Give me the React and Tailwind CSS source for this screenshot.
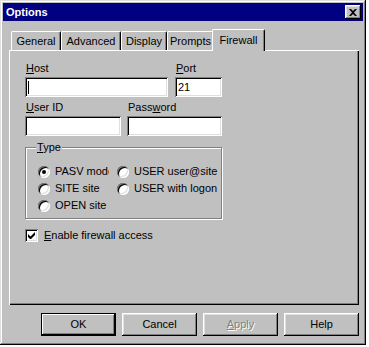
import React from "react";

const raised =
  "shadow-[inset_-1px_-1px_#000,inset_1px_1px_#fff,inset_-2px_-2px_#808080,inset_2px_2px_#dfdfdf]";
const sunken =
  "shadow-[inset_1px_1px_#808080,inset_-1px_-1px_#fff,inset_2px_2px_#000,inset_-2px_-2px_#dfdfdf]";

function Tab({ label, width, active }) {
  if (active) {
    return (
      <div
        className={`relative z-10 -ml-[2px] -mb-[1px] flex h-[22px] ${width} items-start justify-center rounded-t-[2px] border-l border-t border-r border-white border-r-black bg-[#c0c0c0] pt-[4px] shadow-[inset_-1px_0_#808080]`}
      >
        {label}
      </div>
    );
  }
  return (
    <div
      className={`flex h-[19px] ${width} items-start justify-center rounded-t-[2px] border-l border-t border-r border-white border-r-black pt-[3px] shadow-[inset_-1px_0_#808080]`}
    >
      {label}
    </div>
  );
}

function Radio({ checked, label, clip }) {
  return (
    <div className="flex h-[17px] items-center gap-[5px]">
      <span
        className={`flex h-[12px] w-[12px] shrink-0 items-center justify-center rounded-full bg-white ${sunken}`}
      >
        {checked && <span className="h-[4px] w-[4px] rounded-full bg-black" />}
      </span>
      <span className={clip ? "w-[54px] overflow-hidden whitespace-nowrap" : "whitespace-nowrap"}>
        {label}
      </span>
    </div>
  );
}

function Button({ children, isDefault }) {
  return (
    <div
      className={`flex h-[23px] w-[75px] items-center justify-center bg-[#c0c0c0] ${
        isDefault
          ? "border border-black shadow-[inset_-1px_-1px_#000,inset_1px_1px_#fff,inset_-2px_-2px_#808080]"
          : raised
      }`}
    >
      {children}
    </div>
  );
}

export default function App() {
  return (
    <div className="h-[347px] w-[369px] bg-white font-['Liberation_Sans',sans-serif] text-[11px] leading-[13px] text-black">
      <div className="flex h-[345px] w-[366px] flex-col bg-[#c0c0c0] p-[3px] shadow-[inset_-1px_-1px_#000,inset_1px_1px_#dfdfdf,inset_-2px_-2px_#808080,inset_2px_2px_#fff]">
        {/* title bar */}
        <div className="flex h-[18px] items-center justify-between bg-[#000080] pl-[3px] pr-[2px]">
          <span className="font-bold text-white">Options</span>
          <div className={`flex h-[14px] w-[16px] items-center justify-center bg-[#c0c0c0] ${raised}`}>
            <svg width="8" height="7" viewBox="0 0 8 7">
              <path d="M0 0h2l2 2 2-2h2L5 3.5 8 7H6L4 5 2 7H0l3-3.5z" fill="#000" />
            </svg>
          </div>
        </div>

        <div className="flex flex-col px-[6px] pt-[8px]">
          {/* tabs */}
          <div className="flex h-[21px] items-end pl-[2px]">
            <Tab label="General" width="w-[50px]" />
            <Tab label="Advanced" width="w-[60px]" />
            <Tab label="Display" width="w-[46px]" />
            <Tab label="Prompts" width="w-[47px]" />
            <Tab label="Firewall" width="w-[53px]" active />
          </div>

          {/* panel */}
          <div className="flex h-[255px] w-[350px] flex-col pl-[16px] pt-[12px] shadow-[inset_1px_1px_#fff,inset_-1px_-1px_#000,inset_-2px_-2px_#808080]">
            <div className="flex gap-[7px]">
              <div className="flex w-[143px] flex-col">
                <span className="h-[15px] pl-[1px]">
                  <u>H</u>ost
                </span>
                <div className={`flex h-[20px] items-center bg-white pl-[3px] ${sunken}`}>
                  <span className="h-[13px] w-[1px] bg-black" />
                </div>
              </div>
              <div className="flex w-[47px] flex-col">
                <span className="h-[15px] pl-[1px]">
                  <u>P</u>ort
                </span>
                <div className={`flex h-[20px] items-center bg-white pl-[3px] ${sunken}`}>21</div>
              </div>
            </div>

            <div className="mt-[4px] flex gap-[6px]">
              <div className="flex w-[96px] flex-col">
                <span className="h-[15px] pl-[1px]">
                  <u>U</u>ser ID
                </span>
                <div className={`h-[20px] bg-white ${sunken}`} />
              </div>
              <div className="flex w-[95px] flex-col">
                <span className="h-[15px] pl-[1px]">
                  Pass<u>w</u>ord
                </span>
                <div className={`h-[20px] bg-white ${sunken}`} />
              </div>
            </div>

            {/* type group */}
            <div className="relative mt-[11px] h-[72px] w-[197px] border border-[#808080] pl-[12px] pt-[15px] shadow-[inset_1px_1px_#fff,1px_1px_#fff]">
              <span className="absolute -top-[7px] left-[10px] bg-[#c0c0c0] px-[1px]">
                <u>T</u>ype
              </span>
              <div className="grid grid-cols-[79px_1fr]">
                <Radio checked label="PASV mode" clip />
                <Radio label="USER user@site" />
                <Radio label="SITE site" />
                <Radio label="USER with logon" />
                <Radio label="OPEN site" />
              </div>
            </div>

            <div className="mt-[10px] flex items-center gap-[6px]">
              <span className={`flex h-[13px] w-[13px] items-center justify-center bg-white ${sunken}`}>
                <svg width="7" height="7" viewBox="0 0 7 7">
                  <path d="M0 2v3l2 2h1l4-4V0L2.5 4.5z" fill="#000" />
                </svg>
              </span>
              <span>
                <u>E</u>nable firewall access
              </span>
            </div>
          </div>

          {/* buttons */}
          <div className="mt-[8px] flex w-[350px] justify-end gap-[6px]">
            <Button isDefault>OK</Button>
            <Button>Cancel</Button>
            <Button>
              <span className="text-[#808080] [text-shadow:1px_1px_#fff]">
                <u>A</u>pply
              </span>
            </Button>
            <Button>Help</Button>
          </div>
        </div>
      </div>
    </div>
  );
}
